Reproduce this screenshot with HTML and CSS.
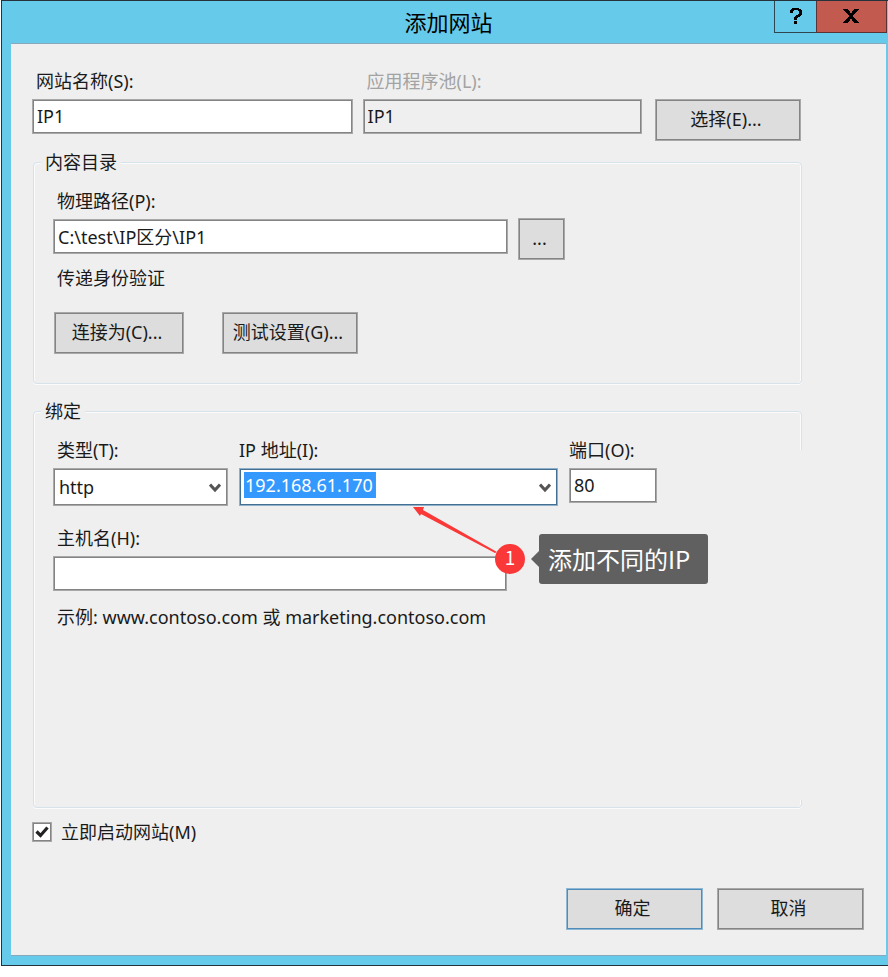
FILE: index.html
```html
<!DOCTYPE html>
<html lang="zh-CN">
<head>
<meta charset="utf-8">
<meta name="viewport" content="width=device-width, initial-scale=1">
<title>添加网站</title>
<link rel="stylesheet" href="styles.css">
</head>
<body>
<main class="window">
  <header class="titlebar">
    <h1 class="title">添加网站</h1>
    <div class="caption-buttons">
      <button class="caption help" type="button" aria-label="帮助">
        <svg width="12" height="16" viewBox="0 0 12 16" fill="#000" shape-rendering="crispEdges"><path d="M2 0h7v1h2v1h1v5h-1v1h-1v1H8v1H7v2H4V9h1V8h1V7h2V6h1V3H8V2H4v1H3v2H0V2h1V1h1zM4 13h3v3H4z"/></svg>
      </button>
      <button class="caption close" type="button" aria-label="关闭">
        <svg width="16" height="14" viewBox="0 0 16 14" fill="#000" shape-rendering="crispEdges"><path d="M0 0h5v1h1v1h1v2h2V2h1V1h1V0h5v1h-1v1h-1v1h-1v1h-1v1h-1v1h-1v2h1v1h1v1h1v1h1v1h1v1h1v1h-5v-1h-1v-1h-1v-2H7v2H6v1H5v1H0v-1h1v-1h1v-1h1v-1h1V9h1V8h1V6H5V5H4V4H3V3H2V2H1V1H0z"/></svg>
      </button>
    </div>
  </header>

  <form class="client">
    <div class="site-row">
      <div class="field">
        <label for="site">网站名称(S):</label>
        <input class="box" id="site" type="text" value="IP1">
      </div>
      <div class="field">
        <label class="dim" for="pool">应用程序池(L):</label>
        <input class="box readonly" id="pool" type="text" value="IP1" readonly>
      </div>
      <button class="btn select-btn" type="button">选择(E)...</button>
    </div>

    <fieldset class="group content-group">
      <legend>内容目录</legend>
      <div class="path-row">
        <div class="field">
          <label for="path">物理路径(P):</label>
          <input class="box" id="path" type="text" value="C:\test\IP区分\IP1">
        </div>
        <button class="btn browse" type="button">...</button>
      </div>
      <p class="auth">传递身份验证</p>
      <div class="auth-buttons">
        <button class="btn" type="button">连接为(C)...</button>
        <button class="btn" type="button">测试设置(G)...</button>
      </div>
    </fieldset>

    <fieldset class="group binding-group">
      <legend>绑定</legend>
      <div class="binding-row">
        <div class="field">
          <label for="type">类型(T):</label>
          <div class="dropdown">
            <select class="box" id="type"><option>http</option><option>https</option></select>
            <svg class="chevron" width="12" height="10" viewBox="0 0 12 10"><path d="M1 1.5L6 7L11 1.5" fill="none" stroke="#555" stroke-width="3"/></svg>
          </div>
        </div>
        <div class="field flush">
          <label for="ip">IP 地址(I):</label>
          <div class="combo">
            <input id="ip" type="text" value="192.168.61.170">
            <button type="button" aria-label="展开">
              <svg width="12" height="10" viewBox="0 0 12 10"><path d="M1 1.5L6 7L11 1.5" fill="none" stroke="#555" stroke-width="3"/></svg>
            </button>
          </div>
        </div>
        <div class="field flush">
          <label for="port">端口(O):</label>
          <input class="box" id="port" type="text" value="80">
        </div>
      </div>
      <div class="field host">
        <label for="host">主机名(H):</label>
        <input class="box" id="host" type="text">
        <div class="callout">
          <svg width="112" height="69" viewBox="0 0 112 69">
            <path d="M0 1H11L10 4L84 46L82 47L8 8L7 10Z" fill="#fb3838"/>
            <circle cx="97" cy="53" r="15" fill="#fb3838"/>
            <text x="97" y="59" text-anchor="middle">1</text>
          </svg>
          <span class="tip">添加不同的IP</span>
        </div>
      </div>
      <p class="example">示例: www.contoso.com 或 marketing.contoso.com</p>
    </fieldset>

    <label class="start">
      <span class="check">
        <input type="checkbox" checked>
        <svg width="14" height="12" viewBox="0 0 14 12"><path d="M1.500 5.500L5.500 9.500L12.500 1.500" fill="none" stroke="#222" stroke-width="3.200"/></svg>
      </span>
      立即启动网站(M)
    </label>

    <footer class="actions">
      <button class="btn ok" type="submit">确定</button>
      <button class="btn" type="button">取消</button>
    </footer>
  </form>
</main>
</body>
</html>
```
FILE: styles.css
```css
* {
  box-sizing: border-box;
}

body {
  margin: 0;
  background: #fff;
  color: #1a1a1a;
  font: 18px/24px "Noto Sans", "Noto Sans CJK SC", sans-serif;
}

button,
input,
select {
  font: inherit;
  color: inherit;
  margin: 0;
  border-radius: 0;
}

h1,
p {
  margin: 0;
}

.window {
  margin-left: 1px;
  padding: 0 2px 9px 9px;
  border: solid #26323b;
  border-width: 1px 0 1px 1px;
  background: #66caea;
}

.titlebar {
  position: relative;
  height: 42px;
  display: flex;
  justify-content: center;
  align-items: center;
}

.title {
  font-size: 22px;
  line-height: 32px;
  font-weight: 400;
  color: #000;
}

.caption-buttons {
  position: absolute;
  top: 0;
  right: -1px;
  display: flex;
}

.caption {
  height: 32px;
  padding: 0 2px 1px 0;
  display: flex;
  align-items: center;
  justify-content: center;
  border: 1px solid #2d4650;
  border-top: 0;
  background: #66caea;
}

.help {
  width: 42px;
  padding-right: 0;
  border-right: 0;
}

.close {
  width: 71px;
  border-color: #5a3434;
  background: #c35a50;
}

.client {
  padding: 25px 22px 25px 21px;
  border: solid #86a9bb;
  border-width: 1px 0;
  background: #efefef;
}

.field {
  display: flex;
  flex-direction: column;
  gap: 6px;
}

.field label {
  padding-left: 4px;
}

.flush label {
  padding-left: 0;
}

.dim {
  color: #a3a3a3;
}

.box,
.btn,
.combo,
.check input {
  border: 1px solid #a8a8a8;
  box-shadow: inset 0 0 0 1px #848484;
}

.box {
  width: 100%;
  height: 35px;
  padding: 0 4px 1px;
  background: #fff;
  outline: 0;
}

.readonly {
  background: #efefef;
}

.btn {
  height: 42px;
  padding: 0 4px 2px 0;
  background: #ddd;
}

.site-row {
  display: grid;
  grid-template-columns: 320fr 279fr 149px;
  column-gap: 10px;
  margin-right: 63px;
}

.select-btn {
  margin: 30px 0 0 3px;
}

.group {
  position: relative;
  min-width: 0;
  margin: 0 62px 0 1px;
  padding: 15px 20px 0 19px;
  border: 1px solid #d6e2e9;
  border-radius: 4px;
  box-shadow: inset 1px 1px #fbfbfb, inset -1px 0 #fbfbfb, 0 1px #fbfbfb;
}

.group legend {
  margin-left: -12px;
  padding: 0 4px;
  background: #efefef;
}

.content-group {
  margin-top: 9px;
  padding-bottom: 29px;
}

.path-row {
  display: grid;
  grid-template-columns: minmax(0, 455px) 47px;
  gap: 10px;
  align-items: end;
}

.browse {
  margin-bottom: -6px;
}

.auth {
  margin-top: 12px;
  padding-left: 4px;
}

.auth-buttons {
  display: grid;
  grid-template-columns: 130px 136px;
  gap: 38px;
  margin: 22px 0 0 1px;
}

.binding-group {
  margin-top: 15px;
  padding-bottom: 178px;
}

.binding-group::after {
  content: "";
  position: absolute;
  top: 27px;
  right: -1px;
  bottom: 7px;
  width: 3px;
  background: #efefef;
}

.binding-row {
  display: grid;
  grid-template-columns: minmax(0, 175px) minmax(0, 319px) 88px;
  gap: 11px;
}

.dropdown {
  position: relative;
}

.dropdown .box {
  display: block;
  height: 38px;
  padding-left: 5px;
  appearance: none;
}

.chevron {
  position: absolute;
  right: 7px;
  top: 15px;
  pointer-events: none;
}

.combo {
  height: 38px;
  display: flex;
  align-items: flex-start;
  justify-content: space-between;
  padding: 3px 3px 3px 4px;
  border-color: #8fb0c8;
  box-shadow: inset 0 0 0 1px #426f92;
  background: #fff;
}

.combo input {
  width: 132px;
  height: 26px;
  padding: 0 0 0 1px;
  border: 0;
  border-right: 1px solid #c97b35;
  background: #39f;
  color: #fff;
  outline: 0;
}

.combo button {
  height: 28px;
  padding: 0 3px;
  border: 0;
  background: none;
}

.host {
  position: relative;
  max-width: 454px;
  margin-top: 20px;
}

.callout {
  position: absolute;
  left: calc(100% - 94px);
  top: -20px;
  display: flex;
  align-items: flex-end;
  gap: 14px;
}

.callout text {
  fill: #fff;
  font: 19px "Noto Sans CJK SC", sans-serif;
}

.tip {
  position: relative;
  flex: none;
  height: 50px;
  margin-bottom: -9px;
  padding: 0 18px 0 9px;
  border-radius: 3px;
  background: #606060;
  color: #fff;
  font: 24px/50px "Noto Sans CJK SC", sans-serif;
  white-space: nowrap;
}

.tip::before {
  content: "";
  position: absolute;
  left: -8px;
  top: 17px;
  border: solid transparent;
  border-width: 8px 8px 8px 0;
  border-right-color: #606060;
}

.example {
  margin-top: 14px;
  padding-left: 4px;
}

.start {
  width: fit-content;
  display: flex;
  align-items: center;
  gap: 9px;
  margin-top: 12px;
}

.check {
  position: relative;
  width: 20px;
  height: 20px;
}

.check input {
  display: block;
  width: 20px;
  height: 20px;
  appearance: none;
  background: #fff;
}

.check svg {
  position: absolute;
  left: 3px;
  top: 4px;
  pointer-events: none;
}

.check input:not(:checked) + svg {
  display: none;
}

.actions {
  display: grid;
  grid-template-columns: 137px 147px;
  justify-content: end;
  gap: 14px;
  margin-top: 44px;
}

.ok {
  border-color: #8fb8d6;
  box-shadow: inset 0 0 0 1px #4f8cb8;
}
```
